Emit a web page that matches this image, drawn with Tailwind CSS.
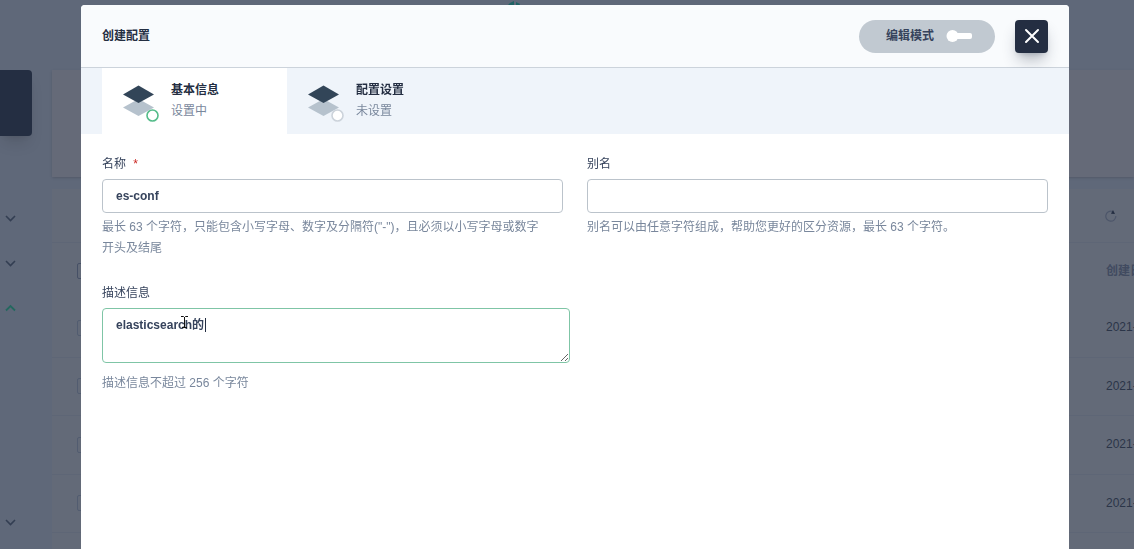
<!DOCTYPE html>
<html lang="zh-CN">
<head>
  <meta charset="UTF-8">
  <title>创建配置</title>
  <script src="https://cdn.jsdelivr.net/npm/@tailwindcss/browser@4"></script>
</head>
<body class="h-screen overflow-hidden bg-[#5f6879] font-['Liberation_Sans','Noto_Sans_CJK_SC',sans-serif] text-[12px] leading-[21px] text-[#36435c]">

  <!-- page behind the dialog -->
  <div class="relative flex h-screen overflow-hidden">
    <aside class="flex w-[52px] shrink-0 flex-col pt-[70px] text-[#333e52]">
      <div class="h-[66px] w-8 shrink-0 rounded-r bg-[#242e42] shadow-lg"></div>
      <nav class="flex flex-1 flex-col pt-[76px] pl-1">
        <button aria-label="展开" class="mb-[33px] h-3 w-3"><svg class="h-3 w-3" viewBox="0 0 12 12" fill="none" stroke="currentColor" stroke-width="1.6"><path d="M2 4l4.500 4.500L11 4"/></svg></button>
        <button aria-label="展开" class="mb-[33px] h-3 w-3"><svg class="h-3 w-3" viewBox="0 0 12 12" fill="none" stroke="currentColor" stroke-width="1.6"><path d="M2 4l4.500 4.500L11 4"/></svg></button>
        <button aria-label="收起" class="h-3 w-3 text-[#24685f]"><svg class="h-3 w-3" viewBox="0 0 12 12" fill="none" stroke="currentColor" stroke-width="1.8"><path d="M2 8.500l4.500-4.500L11 8.500"/></svg></button>
        <button aria-label="展开" class="mt-auto mb-[21px] h-3 w-3"><svg class="h-3 w-3" viewBox="0 0 12 12" fill="none" stroke="currentColor" stroke-width="1.6"><path d="M2 4l4.500 4.500L11 4"/></svg></button>
      </nav>
    </aside>

    <main class="min-w-0 flex-1">
      <header class="flex h-[70px] justify-center pr-[156px]">
        <svg class="h-5 w-5" viewBox="0 0 20 20" fill="#1f6264"><path d="M2 6L5 3l4-2v5zM11 2l4 2-1 2h-3z"/></svg>
      </header>
      <section class="mb-3 h-[107px] bg-[#656a78] shadow-sm"></section>
      <section class="h-[400px] bg-[#636a78]">
        <div class="flex h-[54px] items-center justify-end border-b border-[#5e6676] pr-[17px]">
          <button aria-label="刷新" class="h-3 w-3"><svg class="h-3 w-3" viewBox="0 0 12 12" fill="none"><path d="M7.500 1.500A5 5 0 1 0 10.800 6" stroke="#4d566a" stroke-width="1.200"/><path d="M8 0l2 4-4-.3z" fill="#242e42"/></svg></button>
        </div>
        <table class="w-full table-fixed text-left text-[#2b3548]">
          <thead>
            <tr class="h-14">
              <th class="pl-[25px]"><input type="checkbox" aria-label="全选" class="block h-4 w-4 appearance-none rounded-xs border border-[#465066]"></th>
              <th class="w-7 overflow-hidden font-bold whitespace-nowrap text-[#414b60]">创建日期</th>
            </tr>
          </thead>
          <tbody>
            <tr class="h-[58px] border-b border-[#5e6676]">
              <td class="pl-[25px]"><input type="checkbox" aria-label="选择" class="block h-4 w-4 appearance-none rounded-xs border border-[#525c70]"></td>
              <td class="overflow-hidden whitespace-nowrap">2021-</td>
            </tr>
            <tr class="h-[58px] border-b border-[#5e6676]">
              <td class="pl-[25px]"><input type="checkbox" aria-label="选择" class="block h-4 w-4 appearance-none rounded-xs border border-[#525c70]"></td>
              <td class="overflow-hidden whitespace-nowrap">2021-</td>
            </tr>
            <tr class="h-[59px] border-b border-[#5e6676]">
              <td class="pl-[25px]"><input type="checkbox" aria-label="选择" class="block h-4 w-4 appearance-none rounded-xs border border-[#525c70]"></td>
              <td class="overflow-hidden whitespace-nowrap">2021-</td>
            </tr>
            <tr class="h-[58px] border-b border-[#5e6676]">
              <td class="pl-[25px]"><input type="checkbox" aria-label="选择" class="block h-4 w-4 appearance-none rounded-xs border border-[#525c70]"></td>
              <td class="overflow-hidden whitespace-nowrap">2021-</td>
            </tr>
          </tbody>
        </table>
      </section>
    </main>
  </div>

  <!-- dialog -->
  <div class="fixed inset-0 flex pt-[5px] pr-[65px] pl-[81px]">
    <div role="dialog" aria-labelledby="dialog-title" class="flex flex-1 flex-col overflow-hidden rounded-t bg-white">
      <header class="flex h-[63px] items-center border-b border-[#ccd3db] bg-[#f9fbfd] px-[21px]">
        <h1 id="dialog-title" class="flex-1 font-bold text-[#242e42]">创建配置</h1>
        <button role="switch" aria-checked="false" class="flex h-[33px] w-[136px] items-center justify-center gap-3 rounded-full bg-[#c1c9d1] pl-1 font-bold text-[#36435c]">
          编辑模式
          <svg class="h-3 w-[26px]" viewBox="0 0 26 12" fill="#fff"><rect x="4" y="3" width="22" height="6" rx="2"/><circle cx="6.500" cy="6" r="6"/></svg>
        </button>
        <button aria-label="关闭" class="ml-5 flex h-[33px] w-[33px] items-center justify-center rounded bg-[#242e42] shadow-lg shadow-[#242e42]/30">
          <svg class="h-4 w-4" viewBox="0 0 16 16" fill="none" stroke="#fff" stroke-width="2" stroke-linecap="round"><path d="M2 2l12 12M14 2L2 14"/></svg>
        </button>
      </header>

      <ol class="flex h-[66px] bg-[#eff4fa] pl-[21px]">
        <li class="flex w-[185px] bg-white pt-3 pl-5">
          <svg class="mt-[5px] h-[38px] w-[38px]" viewBox="0 0 38 38"><path d="M1 22.500L16.500 14 32 22.500 16.500 31z" fill="#b6c2cd"/><path d="M1 9.500L16.500 .5 32 9.500 16.500 18z" fill="#324558"/><circle cx="30.500" cy="30.500" r="5.500" fill="#fff" stroke="#55bc8a" stroke-width="1.600"/></svg>
          <div class="ml-[11px]">
            <p class="font-bold text-[#242e42]">基本信息</p>
            <p class="text-[#79879c]">设置中</p>
          </div>
        </li>
        <li class="flex w-[185px] pt-3 pl-5">
          <svg class="mt-[5px] h-[38px] w-[38px]" viewBox="0 0 38 38"><path d="M1 22.500L16.500 14 32 22.500 16.500 31z" fill="#b6c2cd"/><path d="M1 9.500L16.500 .5 32 9.500 16.500 18z" fill="#324558"/><circle cx="30.500" cy="30.500" r="5.500" fill="#fff" stroke="#ccd3db" stroke-width="1.600"/></svg>
          <div class="ml-[11px]">
            <p class="font-bold text-[#242e42]">配置设置</p>
            <p class="text-[#79879c]">未设置</p>
          </div>
        </li>
      </ol>

      <form class="grid grid-cols-2 gap-6 px-[21px] pt-5">
        <div>
          <label for="name" class="mb-1 block">名称 <span class="ml-1 text-[#ca2621]">*</span></label>
          <input id="name" type="text" value="es-conf" class="block h-[34px] w-full rounded border border-[#bbc3cb] px-[13px] font-bold text-[#36435c] outline-none">
          <p class="mt-1 text-[#79879c]">最长 63 个字符，只能包含小写字母、数字及分隔符("-")，且必须以小写字母或数字<br>开头及结尾</p>
        </div>
        <div>
          <label for="alias" class="mb-1 block">别名</label>
          <input id="alias" type="text" class="block h-[34px] w-full rounded border border-[#bbc3cb] px-[13px] font-bold text-[#36435c] outline-none">
          <p class="mt-1 text-[#79879c]">别名可以由任意字符组成，帮助您更好的区分资源，最长 63 个字符。</p>
        </div>
        <div>
          <label for="description" class="mb-1 block">描述信息</label>
          <div class="relative -mr-[7px]">
            <textarea id="description" class="block h-[55px] w-full rounded border border-[#7fc5a6] px-[13px] py-[6px] font-bold text-[#36435c] outline-none">elasticsearch的</textarea>
            <!-- text caret and mouse pointer -->
            <span class="absolute top-[10px] left-[103px] h-[14px] w-px bg-[#242e42]"></span>
            <svg class="absolute top-2 left-[79px] h-3 w-[7px]" viewBox="0 0 7 12" fill="none" stroke="#111"><path d="M0 .5h2.500l1 1 1-1H7M3.500 1v10M1 11.500h5"/></svg>
          </div>
          <p class="mt-[10px] text-[#79879c]">描述信息不超过 256 个字符</p>
        </div>
      </form>
    </div>
  </div>

</body>
</html>
